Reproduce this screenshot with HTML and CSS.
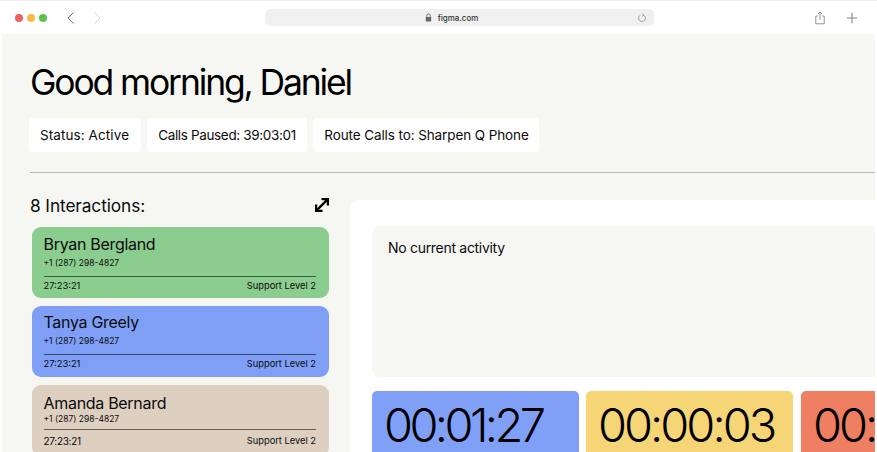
FILE: index.html
```html
<!DOCTYPE html>
<html lang="en">
<head>
    <meta charset="UTF-8">
    <meta name="viewport" content="width=device-width, initial-scale=1.0">
    <title>Good morning, Daniel</title>
    <link rel="stylesheet" href="styles.css">
</head>
<body>
    <div class="window">
        <header class="toolbar">
            <div class="lights">
                <span class="light red"></span>
                <span class="light yellow"></span>
                <span class="light green"></span>
            </div>
            <div class="arrows">
                <svg width="10" height="14" viewBox="0 0 10 14"><path d="M7.5 1.5 2 7l5.5 5.5" fill="none" stroke="#666" stroke-width=".9"/></svg>
                <svg width="10" height="14" viewBox="0 0 10 14"><path d="M2.5 1.5 8 7l-5.5 5.5" fill="none" stroke="#ccc" stroke-width=".9"/></svg>
            </div>
            <div class="address">
                <div class="address-text">
                    <svg width="7" height="9" viewBox="0 0 7 9"><path d="M1.8 4V2.6a1.7 1.7 0 0 1 3.4 0V4" fill="none" stroke="#666" stroke-width=".9"/><rect x=".8" y="4" width="5.4" height="4.4" rx=".6" fill="#666"/></svg>
                    <span>figma.com</span>
                </div>
                <svg class="reload" width="10" height="10" viewBox="0 0 10 10"><path d="M6.6 2.1A3.4 3.4 0 1 1 3 2.4" fill="none" stroke="#888" stroke-width=".8"/><path d="M5 .6 6.9 2 5 3.4" fill="none" stroke="#888" stroke-width=".8"/></svg>
            </div>
            <div class="actions">
                <svg width="12" height="14" viewBox="0 0 12 14"><path d="M3.8 5H1.8v7.8h8.4V5h-2M6 9V1.2M3.9 3 6 1l2.1 2" fill="none" stroke="#888" stroke-width=".9"/></svg>
                <svg width="12" height="12" viewBox="0 0 12 12"><path d="M6 .8v10.4M.8 6h10.4" fill="none" stroke="#888" stroke-width="1.1"/></svg>
            </div>
        </header>

        <main class="page">
            <h1>Good morning, Daniel</h1>
            <div class="pills">
                <div class="pill pill-status">Status: Active</div>
                <div class="pill pill-paused">Calls Paused: 39:03:01</div>
                <div class="pill pill-route">Route Calls to: Sharpen Q Phone</div>
            </div>
            <hr class="divider">

            <div class="columns">
                <section class="sidebar">
                    <div class="sidebar-head">
                        <h2>8 Interactions:</h2>
                        <svg width="14" height="14" viewBox="0 0 14 14"><path d="M6.5 1.1h6.4v6.4M12.6 1.4 1.4 12.6M1.1 6.5v6.4h6.4" fill="none" stroke="#000" stroke-width="2.2"/></svg>
                    </div>

                    <article class="card card-green">
                        <h3>Bryan Bergland</h3>
                        <p class="phone">+1 (287) 298-4827</p>
                        <div class="card-foot"><span>27:23:21</span><span>Support Level 2</span></div>
                    </article>
                    <article class="card card-blue">
                        <h3>Tanya Greely</h3>
                        <p class="phone">+1 (287) 298-4827</p>
                        <div class="card-foot"><span>27:23:21</span><span>Support Level 2</span></div>
                    </article>
                    <article class="card card-tan">
                        <h3>Amanda Bernard</h3>
                        <p class="phone">+1 (287) 298-4827</p>
                        <div class="card-foot"><span class="foot-time">27:23:21</span><span>Support Level 2</span></div>
                    </article>
                </section>

                <section class="panel">
                    <div class="activity">No current activity</div>
                    <div class="timers">
                        <div class="timer timer-blue">00:01:27</div>
                        <div class="timer timer-yellow">00:00:03</div>
                        <div class="timer timer-red">00:00:12</div>
                    </div>
                </section>
            </div>
        </main>
    </div>
</body>
</html>
```

FILE: styles.css
```css
* {
    margin: 0;
    padding: 0;
    box-sizing: border-box;
}

html, body {
    height: 100%;
    overflow: hidden;
}

body {
    font-family: Inter, "Liberation Sans", sans-serif;
    background-color: #fff;
    color: #0b0b0b;
}

.window {
    width: 877px;
    height: 452px;
    display: flex;
    flex-direction: column;
    overflow: hidden;
}

/* Browser bar */
.toolbar {
    height: 34px;
    flex-shrink: 0;
    display: flex;
    align-items: center;
    border-top: 1px solid #eee;
    padding-left: 15px;
}

.lights {
    display: flex;
    gap: 4px;
    width: 51px;
}

.light {
    width: 8px;
    height: 8px;
    border-radius: 50%;
}

.red { background-color: #f0605a; }
.yellow { background-color: #f8bb44; }
.green { background-color: #5ac34e; }

.arrows {
    display: flex;
    gap: 16px;
    width: 199px;
}

.address {
    width: 389px;
    height: 17px;
    background-color: #f0f0f0;
    border-radius: 5px;
    display: flex;
    align-items: center;
    justify-content: center;
    position: relative;
}

.address-text {
    display: flex;
    align-items: center;
    gap: 6px;
    font-size: 8px;
    color: #333;
    font-weight: 500;
    padding-right: 16px;
}

.reload {
    position: absolute;
    right: 7px;
    top: 4px;
}

.actions {
    display: flex;
    align-items: center;
    gap: 20px;
    margin-left: 160px;
}

/* Page content */
.page {
    flex: 1;
    margin: 0 2px;
    padding: 27px 0 0 28px;
    background-color: #f6f7f2;
    overflow: hidden;
}

h1 {
    font-size: 35.5px;
    font-weight: 400;
    line-height: 44px;
    letter-spacing: -2.15px;
    color: #000;
}

.pills {
    display: flex;
    gap: 6px;
    margin-top: 13px;
    margin-left: -1px;
    height: 34px;
}

.pill {
    background-color: #fff;
    border-radius: 4px;
    display: flex;
    align-items: center;
    justify-content: center;
    font-size: 13.5px;
}

.pill-status { width: 112px; letter-spacing: 0.1px; padding-right: 1px; }
.pill-paused { width: 160px; letter-spacing: -0.35px; }
.pill-route { width: 226px; letter-spacing: -0.1px; padding-left: 1px; }

.divider {
    border: none;
    border-top: 1px solid #bcbdb2;
    margin-top: 20px;
}

.columns {
    display: flex;
    margin-top: 26px;
}

.sidebar {
    width: 299px;
    flex-shrink: 0;
}

.sidebar-head {
    display: flex;
    align-items: center;
    justify-content: space-between;
    height: 12px;
    margin-bottom: 16px;
}

h2 {
    font-size: 17.3px;
    font-weight: 400;
    letter-spacing: -0.1px;
}

.card {
    margin: 0 0 8px 2px;
    width: 297px;
    height: 71px;
    border-radius: 9px;
    padding: 7px 13px 0 11.5px;
}

.card-green { background-color: #8bcc8f; }
.card-blue { background-color: #7f9ff6; }
.card-tan { background-color: #ded0c1; }

h3 {
    font-size: 16px;
    font-weight: 400;
    line-height: 20px;
    letter-spacing: -0.3px;
}

.phone {
    font-size: 8.5px;
    line-height: 12px;
    margin-top: 3px;
}

.card-blue h3 { margin-top: -1px; }

.card-tan h3 { margin-top: 1px; }
.card-tan .phone { margin-top: 0; }

.card-foot {
    display: flex;
    justify-content: space-between;
    border-top: 1px solid rgba(0, 0, 0, 0.55);
    margin-top: 7px;
    padding-top: 3px;
    font-size: 9.3px;
    line-height: 12px;
}

.card-tan .card-foot {
    margin-top: 4px;
    padding-top: 5px;
}

.foot-time {
    font-size: 10px;
    letter-spacing: -0.3px;
}

.panel {
    margin-left: 21px;
    margin-top: 1px;
    width: 600px;
    height: 300px;
    background-color: #fff;
    border-radius: 8px 0 0 0;
    padding: 26px 0 0 22px;
    flex-shrink: 0;
}

.activity {
    height: 151px;
    background-color: #f6f7f2;
    border-radius: 8px;
    padding: 13px 16px;
    font-size: 14px;
    line-height: 17px;
    letter-spacing: -0.3px;
}

.timers {
    display: flex;
    gap: 7px;
    margin-top: 14px;
}

.timer {
    width: 207px;
    height: 80px;
    flex-shrink: 0;
    border-radius: 5px;
    padding: 9px 0 0 12px;
    font-size: 47px;
    font-weight: 300;
    line-height: 50px;
    letter-spacing: -3px;
    color: #000;
}

.timer-blue { background-color: #80a0f8; letter-spacing: -3.6px; }
.timer-yellow { background-color: #f6d577; }
.timer-red { background-color: #ef7f62; margin-left: 1px; }
```
